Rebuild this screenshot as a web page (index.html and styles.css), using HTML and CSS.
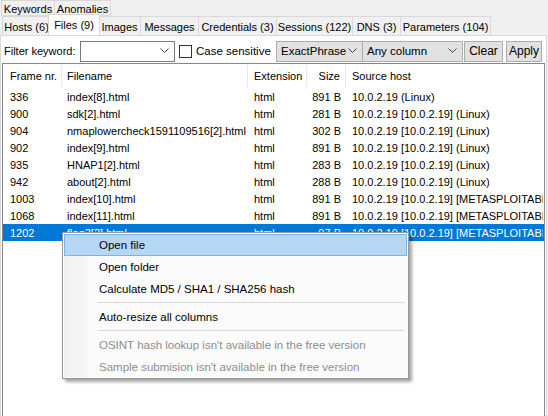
FILE: index.html
```html
<!DOCTYPE html>
<html>
<head>
<meta charset="utf-8">
<link rel="stylesheet" href="styles.css">
</head>
<body>
<div class="tabs row1">
  <div class="tab w-kw">Keywords</div>
  <div class="tab w-an">Anomalies</div>
</div>
<div class="tabs row2">
  <div class="tab w-ho">Hosts (6)</div>
  <div class="tab sel w-fi">Files (9)</div>
  <div class="tab w-im">Images</div>
  <div class="tab w-me">Messages</div>
  <div class="tab w-cr">Credentials (3)</div>
  <div class="tab w-se">Sessions (122)</div>
  <div class="tab w-dn">DNS (3)</div>
  <div class="tab w-pa">Parameters (104)</div>
</div>
<div class="panel">
  <div class="filter">
    <span class="flabel">Filter keyword:</span>
    <div class="combo white w-kwbox"><span></span><svg class="chev" width="9" height="6" viewBox="0 0 9 6"><path d="M0.5 0.5 L4.5 4.5 L8.5 0.5" fill="none" stroke="#444" stroke-width="1"/></svg></div>
    <div class="check"></div>
    <span class="clabel">Case sensitive</span>
    <div class="combo grey w-ex"><span>ExactPhrase</span><svg class="chev" width="9" height="6" viewBox="0 0 9 6"><path d="M0.5 0.5 L4.5 4.5 L8.5 0.5" fill="none" stroke="#444" stroke-width="1"/></svg></div>
    <div class="combo grey w-any"><span>Any column</span><svg class="chev" width="9" height="6" viewBox="0 0 9 6"><path d="M0.5 0.5 L4.5 4.5 L8.5 0.5" fill="none" stroke="#444" stroke-width="1"/></svg></div>
    <div class="btn w-clear">Clear</div>
    <div class="btn w-apply">Apply</div>
  </div>
  <div class="list">
    <div class="head">
      <div class="c c1">Frame nr.</div>
      <div class="c c2">Filename</div>
      <div class="c c3">Extension</div>
      <div class="c c4">Size</div>
      <div class="c c5">Source host</div>
    </div>
    <div class="rows">
      <div class="row"><div class="c c1">336</div><div class="c c2">index[8].html</div><div class="c c3">html</div><div class="c c4">891 B</div><div class="c c5">10.0.2.19 (Linux)</div></div>
      <div class="row"><div class="c c1">900</div><div class="c c2">sdk[2].html</div><div class="c c3">html</div><div class="c c4">281 B</div><div class="c c5">10.0.2.19 [10.0.2.19] (Linux)</div></div>
      <div class="row"><div class="c c1">904</div><div class="c c2">nmaplowercheck1591109516[2].html</div><div class="c c3">html</div><div class="c c4">302 B</div><div class="c c5">10.0.2.19 [10.0.2.19] (Linux)</div></div>
      <div class="row"><div class="c c1">902</div><div class="c c2">index[9].html</div><div class="c c3">html</div><div class="c c4">891 B</div><div class="c c5">10.0.2.19 [10.0.2.19] (Linux)</div></div>
      <div class="row"><div class="c c1">935</div><div class="c c2">HNAP1[2].html</div><div class="c c3">html</div><div class="c c4">283 B</div><div class="c c5">10.0.2.19 [10.0.2.19] (Linux)</div></div>
      <div class="row"><div class="c c1">942</div><div class="c c2">about[2].html</div><div class="c c3">html</div><div class="c c4">288 B</div><div class="c c5">10.0.2.19 [10.0.2.19] (Linux)</div></div>
      <div class="row"><div class="c c1">1003</div><div class="c c2">index[10].html</div><div class="c c3">html</div><div class="c c4">891 B</div><div class="c c5">10.0.2.19 [10.0.2.19] [METASPLOITABLE]</div></div>
      <div class="row"><div class="c c1">1068</div><div class="c c2">index[11].html</div><div class="c c3">html</div><div class="c c4">891 B</div><div class="c c5">10.0.2.19 [10.0.2.19] [METASPLOITABLE]</div></div>
      <div class="row selected"><div class="c c1">1202</div><div class="c c2">flag3[2].html</div><div class="c c3">html</div><div class="c c4">97 B</div><div class="c c5">10.0.2.19 [10.0.2.19] [METASPLOITABLE]</div></div>
    </div>
  </div>
</div>
<div class="menu">
  <div class="gutter"></div>
  <div class="item hot">Open file</div>
  <div class="item">Open folder</div>
  <div class="item">Calculate MD5 / SHA1 / SHA256 hash</div>
  <div class="sep"></div>
  <div class="item">Auto-resize all columns</div>
  <div class="sep"></div>
  <div class="item dis">OSINT hash lookup isn't available in the free version</div>
  <div class="item dis">Sample submision isn't available in the free version</div>
</div>
</body>
</html>
```
FILE: styles.css
```css
* { box-sizing: border-box; }
html, body { margin: 0; padding: 0; }
body {
  width: 548px; height: 416px; overflow: hidden;
  background: #f0f0f0;
  font-family: "Liberation Sans", Arial, sans-serif;
  font-size: 11px; color: #000;
  position: relative;
  white-space: nowrap;
}
.tabs { display: flex; position: relative; }
.row1 { height: 16px; padding-left: 1px; }
.row2 { height: 19px; padding-left: 2px; margin-top: 0; z-index: 2; }
.tab {
  border: 1px solid #d9d9d9; border-bottom: none;
  background: #f0f0f0;
  display: flex; align-items: center; justify-content: center;
  height: 100%; margin-right: -1px; white-space: nowrap;
  padding-top: 1px;
}
.row1 .tab { border-bottom: 1px solid #d9d9d9; }
.tab.sel {
  background: #fff; height: 21px; margin-top: -2px;
  margin-left: -2px; margin-right: -2px; position: relative; z-index: 3;
  padding-top: 0;
}
.w-kw { width: 54px; } .w-an { width: 57px; }
.w-ho { width: 49px; } .w-fi { width: 52px; } .w-im { width: 43px; }
.w-me { width: 59px; } .w-cr { width: 79px; } .w-se { width: 77px; }
.w-dn { width: 49px; } .w-pa { width: 91px; }
.panel {
  background: #fff;
  border: 1px solid #d9d9d9;
  margin-left: 0; width: 547px; height: 381px;
  position: relative; z-index: 1;
}
.filter {
  display: flex; align-items: center; height: 26px; padding: 4px 0 0 3px;
}
.flabel { width: 76px; flex: none; }
.combo {
  height: 21px; display: flex; align-items: center; justify-content: space-between;
  padding: 0 5px 1px 4px; position: relative; flex: none;
}
.combo.white { background: #fff; border: 1px solid #7a7a7a; }
.combo.grey { background: #e1e1e1; border: 1px solid #adadad; }
.chev { flex: none; }
.w-kwbox { width: 95px; }
.clabel { width: 80px; flex: none; font-size: 11.5px; }
.w-ex { width: 87px; }
.w-any { width: 101px; margin-left: -1px; }
.check {
  width: 13px; height: 13px; border: 1px solid #333; background: #fff;
  margin-left: 4px; margin-right: 4px; flex: none;
}
.btn {
  height: 21px; background: #e1e1e1; border: 1px solid #adadad; flex: none;
  display: flex; align-items: center; justify-content: center; padding-bottom: 1px;
  font-size: 12px;
}
.w-clear { width: 39px; margin-left: 1px; }
.w-apply { width: 36px; margin-left: 3px; }
.w-ex span, .w-any span { font-size: 11.5px; }
.list {
  margin: 1px 0 0 1px; width: 543px; height: 359px;
  border: 1px solid #828790; border-bottom: none;
  background: #fff; overflow: hidden;
}
.head { display: flex; height: 24px; align-items: center; }
.head .c { border-right: 1px solid #e5e5e5; height: 22px; display: flex; align-items: center; }
.head .c5 { border-right: none; }
.c { white-space: nowrap; overflow: hidden; flex: none; }
.c1 { width: 59px; padding-left: 7px; }
.c2 { width: 186px; padding-left: 5px; }
.c3 { width: 59px; padding-left: 6px; }
.c4 { width: 39px; text-align: right; padding-right: 5px; justify-content: flex-end; }
.c5 { width: 197px; padding-left: 6px; }
.rows { padding-top: 0; }
.row { display: flex; height: 17px; align-items: center; }
.row.selected { background: #0078d7; color: #fff; }
.menu {
  position: absolute; left: 62px; top: 232px; width: 347px; height: 147px;
  background: #fbfbfb; border: 1px solid #979797;
  box-shadow: 3px 3px 3px rgba(0,0,0,0.35);
  padding: 1px; z-index: 10; font-size: 11.5px;
}
.gutter {
  position: absolute; left: 1px; top: 1px; bottom: 1px; width: 24px;
  background: linear-gradient(to right, #f1f1f1, #f6f6f6);
}
.item {
  position: relative; height: 22px; display: flex; align-items: center;
  padding-left: 34px; border: 1px solid transparent;
}
.item.hot { background: #b5d7f3; border-color: #7db4e6; }
.item.dis { color: #8d8d8d; }
.sep { position: relative; height: 6px; margin-left: 34px; margin-right: 2px; }
.sep::after {
  content: ""; position: absolute; left: 0; right: 0; top: 2px; height: 1px; background: #d7d7d7;
}
```
